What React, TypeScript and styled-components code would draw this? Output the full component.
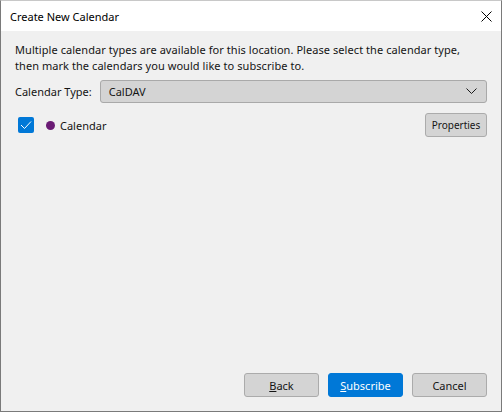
import React from "react";
import styled, { createGlobalStyle } from "styled-components";

const Global = createGlobalStyle`
  html, body { margin: 0; padding: 0; background: #f0f0f0; }
  body { font-family: "Noto Sans", "Open Sans", sans-serif; font-size: 11px; color: #141414; }
  * { box-sizing: border-box; }
`;

const Window = styled.div`
  width: 502px;
  height: 412px;
  display: flex;
  flex-direction: column;
  background: #f0f0f0;
  border: 1px solid #7a7a7a;
  border-top-color: #c8c8c8;
`;

const TitleBar = styled.div`
  height: 30px;
  background: #ffffff;
  display: flex;
  align-items: center;
  justify-content: space-between;
  padding: 0 9px 0 9px;
  flex-shrink: 0;
`;

const Title = styled.span`
  font-size: 11px;
  color: #000;
`;

const CloseBtn = styled.div`
  width: 12px;
  height: 12px;
  display: flex;
  align-items: center;
  justify-content: center;
`;

const Body = styled.div`
  flex: 1;
  display: flex;
  flex-direction: column;
  padding: 11px 14px 0 14px;
`;

const Intro = styled.p`
  margin: 0;
  padding-right: 20px;
  line-height: 16px;
  font-size: 11px;
  letter-spacing: 0.06px;
`;

const TypeRow = styled.div`
  display: flex;
  align-items: center;
  gap: 8px;
  margin-top: 6px;
`;

const Label = styled.span`
  font-size: 11px;
`;

const Select = styled.div`
  flex: 1;
  height: 23px;
  background: #d4d4d4;
  border: 1px solid #a9a9a9;
  border-radius: 3px;
  display: flex;
  align-items: center;
  justify-content: space-between;
  padding: 0 9px 0 8px;
  font-size: 11px;
`;

const CalRow = styled.div`
  display: flex;
  align-items: center;
  margin-top: 10px;
  padding-left: 3px;
`;

const Check = styled.div`
  width: 16px;
  height: 16px;
  background: #0078d7;
  border-radius: 2px;
  display: flex;
  align-items: center;
  justify-content: center;
`;

const Dot = styled.span<{ $color: string }>`
  width: 9px;
  height: 9px;
  border-radius: 50%;
  background: ${(p) => p.$color};
  margin-left: 12px;
  margin-right: 5px;
`;

const CalName = styled.span`
  flex: 1;
  font-size: 11px;
`;

const SmallButton = styled.div`
  height: 24px;
  width: 62px;
  background: #d4d4d4;
  border: 1px solid #ababab;
  border-radius: 3px;
  display: flex;
  align-items: center;
  justify-content: center;
  font-size: 10px;
`;

const Footer = styled.div`
  display: flex;
  justify-content: flex-end;
  gap: 9px;
  padding: 0 14px 14px 0;
`;

const Button = styled.div<{ $primary?: boolean }>`
  width: 75px;
  height: 24px;
  border-radius: 3px;
  display: flex;
  align-items: center;
  justify-content: center;
  font-size: 11px;
  background: ${(p) => (p.$primary ? "#0078d7" : "#d4d4d4")};
  color: ${(p) => (p.$primary ? "#ffffff" : "#141414")};
  border: 1px solid ${(p) => (p.$primary ? "#0078d7" : "#ababab")};
`;

const Key = styled.span`
  text-decoration: underline;
`;

export default function App() {
  return (
    <>
      <Global />
      <Window>
        <TitleBar>
          <Title>Create New Calendar</Title>
          <CloseBtn>
            <svg width="11" height="11" viewBox="0 0 11 11">
              <path d="M0.5 0.5 L10.5 10.5 M10.5 0.5 L0.5 10.5" stroke="#000" strokeWidth="1" />
            </svg>
          </CloseBtn>
        </TitleBar>
        <Body>
          <Intro>
            Multiple calendar types are available for this location. Please select the calendar type,
            then mark the calendars you would like to subscribe to.
          </Intro>
          <TypeRow>
            <Label>Calendar Type:</Label>
            <Select>
              <span>CalDAV</span>
              <svg width="11" height="7" viewBox="0 0 11 7">
                <polyline points="0.5,0.5 5.5,5.5 10.5,0.5" fill="none" stroke="#1a1a1a" strokeWidth="1" />
              </svg>
            </Select>
          </TypeRow>
          <CalRow>
            <Check>
              <svg width="12" height="10" viewBox="0 0 12 10">
                <polyline points="1,5 4.5,8.5 11,1.5" fill="none" stroke="#fff" strokeWidth="1" />
              </svg>
            </Check>
            <Dot $color="#6a1b74" />
            <CalName>Calendar</CalName>
            <SmallButton>Properties</SmallButton>
          </CalRow>
        </Body>
        <Footer>
          <Button>
            <Key>B</Key>ack
          </Button>
          <Button $primary>
            <Key>S</Key>ubscribe
          </Button>
          <Button>Cancel</Button>
        </Footer>
      </Window>
    </>
  );
}
